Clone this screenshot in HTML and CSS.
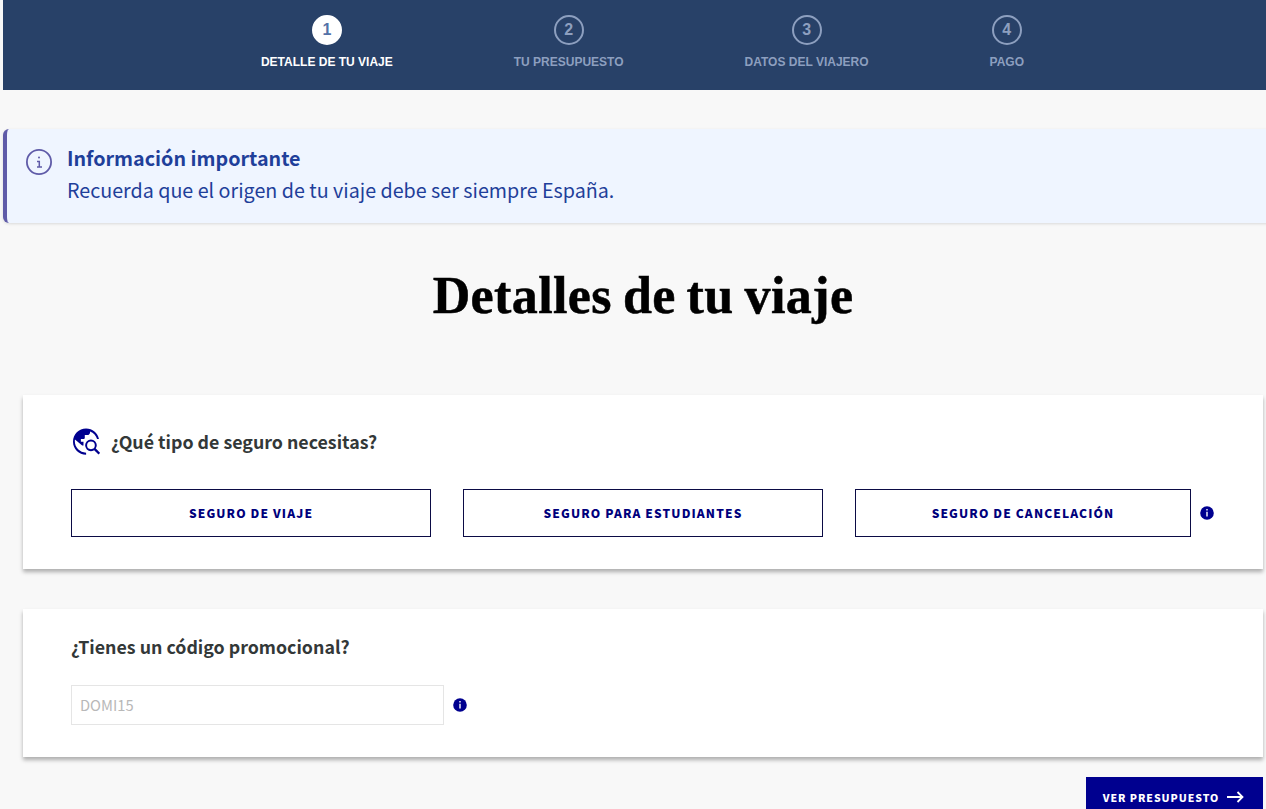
FILE: index.html
```html
<!DOCTYPE html>
<html lang="es">
<head>
    <meta charset="UTF-8">
    <meta name="viewport" content="width=device-width, initial-scale=1.0">
    <title>Detalles de tu viaje</title>
    <link rel="stylesheet" href="styles.css">
</head>
<body>
    <div class="page">
        <header class="steps">
            <div class="step active">
                <span class="step-number">1</span>
                <span class="step-label">Detalle de tu viaje</span>
            </div>
            <div class="step">
                <span class="step-number">2</span>
                <span class="step-label">Tu presupuesto</span>
            </div>
            <div class="step">
                <span class="step-number">3</span>
                <span class="step-label">Datos del viajero</span>
            </div>
            <div class="step">
                <span class="step-number">4</span>
                <span class="step-label">Pago</span>
            </div>
        </header>

        <div class="notice">
            <svg class="notice-icon" viewBox="0 0 26 26" width="26" height="26" fill="none" stroke="#5f5ba8">
                <circle cx="13" cy="13" r="12.1" stroke-width="1.8"/>
                <path d="M11 12.5h2.3v5.3M11 18h5" stroke-width="1.5"/>
                <circle cx="13" cy="8.5" r="1" fill="#5f5ba8" stroke="none"/>
            </svg>
            <div class="notice-text">
                <strong>Información importante</strong>
                <p>Recuerda que el origen de tu viaje debe ser siempre España.</p>
            </div>
        </div>

        <main>
            <h1>Detalles de tu viaje</h1>

            <section class="card card-type">
                <h2>
                    <svg viewBox="2 1.6 20.6 20.6" width="27" height="27">
                        <path d="M12 20.6V22C6.48 22 2 17.52 2 12S6.48 2 12 2c4.84 0 8.87 3.44 9.8 8h-1.45c-.7-2.600-2.600-4.700-5.350-5.800V5c0 1.100-.9 2-2 2h-2v2c0 .55-.45 1-1 1H8v2h2v3H9l-5.500-4.600c-.1.450-.1.900-.1 1.400 0 4.750 3.850 8.600 8.600 8.600z" fill="#00008f"/>
                        <circle cx="15.7" cy="14.8" r="3.7" fill="#fff" stroke="#00008f" stroke-width="1.5"/>
                        <path d="M18.4 17.5l3.7 3.7" stroke="#00008f" stroke-width="1.8"/>
                    </svg>
                    <span>¿Qué tipo de seguro necesitas?</span>
                </h2>
                <div class="options">
                    <button class="option" type="button">Seguro de viaje</button>
                    <button class="option" type="button">Seguro para estudiantes</button>
                    <div class="option-group">
                        <button class="option" type="button">Seguro de cancelación</button>
                        <svg class="info" viewBox="0 0 14 14" width="14" height="14">
                            <circle cx="7" cy="7" r="6.8" fill="#00008f"/>
                            <path d="M6.3 3h1.4v1.4H6.3zM6.3 5.8h1.4v4.7H6.3z" fill="#fff"/>
                        </svg>
                    </div>
                </div>
            </section>

            <section class="card card-promo">
                <h2>¿Tienes un código promocional?</h2>
                <div class="promo">
                    <input type="text" placeholder="DOMI15">
                    <svg class="info" viewBox="0 0 14 14" width="14" height="14">
                        <circle cx="7" cy="7" r="6.8" fill="#00008f"/>
                        <path d="M6.3 3h1.4v1.4H6.3zM6.3 5.8h1.4v4.7H6.3z" fill="#fff"/>
                    </svg>
                </div>
            </section>

            <div class="actions">
                <button class="submit" type="button">
                    <span>Ver presupuesto</span>
                    <svg viewBox="0 0 17 12" width="17" height="12" fill="none" stroke="#fff" stroke-width="1.8">
                        <path d="M0 6h15.500M10.500 1l5 5-5 5"/>
                    </svg>
                </button>
            </div>
        </main>
    </div>
</body>
</html>
```
FILE: styles.css
```css
* {
    box-sizing: border-box;
}

body {
    margin: 0;
    height: 809px;
    overflow: hidden;
    background-color: #f8f8f8;
    font-family: "Noto Sans CJK SC", "Open Sans", sans-serif;
}

.page {
    width: 1280px;
    margin-left: 3px;
}

/* Pasos */
.steps {
    display: flex;
    justify-content: center;
    gap: 121px;
    height: 90px;
    padding-top: 15px;
    padding-right: 1px;
    background-color: #284168;
    font-family: "Liberation Sans", Arial, sans-serif;
    font-weight: bold;
    color: #8d9fbf;
}

.step {
    display: flex;
    flex-direction: column;
    align-items: center;
    gap: 9px;
}

.step-number {
    width: 30px;
    height: 30px;
    border: 2px solid #8d9fbf;
    border-radius: 50%;
    font-size: 16px;
    line-height: 26px;
    text-align: center;
}

.step-label {
    font-size: 12px;
    line-height: 16px;
    text-transform: uppercase;
    white-space: nowrap;
}

.active {
    color: #ffffff;
}

.active .step-number {
    border-color: #ffffff;
    background-color: #ffffff;
    color: #5472a8;
}

/* Aviso */
.notice {
    display: flex;
    gap: 15px;
    height: 94px;
    margin-top: 39px;
    padding: 13px 19px;
    border-left: 4px solid #5f5ba8;
    border-radius: 6px;
    background-color: #eff5ff;
    box-shadow: 0 1px 3px rgba(0, 0, 0, 0.12);
    color: #1f3f9a;
    font-size: 19.7px;
    line-height: 32px;
}

.notice-icon {
    margin-top: 7px;
}

.notice-text p {
    margin: 0;
}

main {
    padding: 0 20px;
}

h1 {
    margin: 41px 0 67px;
    font-family: "Liberation Serif", serif;
    font-size: 52px;
    line-height: 64px;
    letter-spacing: 0.4px;
    word-spacing: -2.5px;
    text-align: center;
    color: #000000;
    -webkit-text-stroke: 0.5px #000000;
}

/* Tarjetas */
.card {
    padding: 0 48px;
    background-color: #ffffff;
    box-shadow: 0 3px 4px rgba(0, 0, 0, 0.3);
}

.card h2 {
    display: flex;
    align-items: center;
    gap: 11px;
    margin: 0;
    font-size: 17.8px;
    line-height: 28px;
    color: #333838;
}

.card-type {
    height: 174px;
    padding-top: 32px;
}

.card-type h2 {
    padding-left: 2px;
}

.card-promo {
    height: 148px;
    margin-top: 40px;
    padding-top: 23px;
}

.options {
    display: grid;
    grid-template-columns: repeat(3, 360px);
    gap: 32px;
    margin-top: 34px;
}

.option-group {
    display: flex;
    align-items: center;
    gap: 9px;
}

.option {
    width: 100%;
    height: 48px;
    padding: 0 6px 2px;
    border: 1px solid #0b0b45;
    background-color: #ffffff;
    font-family: inherit;
    font-size: 12px;
    font-weight: 900;
    letter-spacing: 1.12px;
    text-transform: uppercase;
    color: #00007c;
}

.option-group .option {
    width: 336px;
}

.info {
    flex-shrink: 0;
}

.promo {
    display: flex;
    align-items: center;
    gap: 9px;
    margin-top: 25px;
}

.promo input {
    width: 373px;
    height: 40px;
    padding: 0 8px 2px;
    border: 1px solid #e5e5e5;
    font-family: inherit;
    font-size: 14.7px;
}

.promo input::placeholder {
    color: #b8b8b8;
}

.actions {
    display: flex;
    justify-content: flex-end;
    margin-top: 20px;
}

.submit {
    display: flex;
    align-items: center;
    justify-content: center;
    gap: 8px;
    width: 177px;
    height: 40px;
    padding: 0 2px 0 0;
    border: none;
    background-color: #00008f;
    font-family: inherit;
    font-size: 10.5px;
    font-weight: 900;
    letter-spacing: 0.95px;
    text-transform: uppercase;
    color: #ffffff;
}
```
